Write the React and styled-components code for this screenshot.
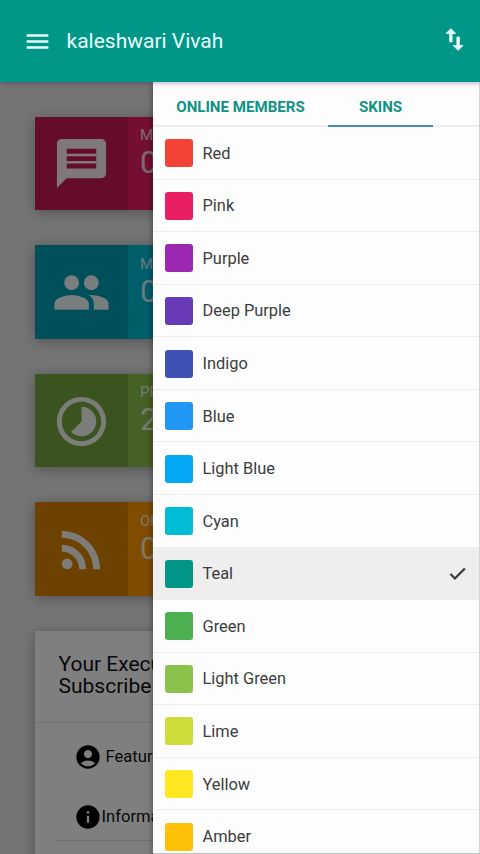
import React, { useState } from 'react';
import styled, { createGlobalStyle } from 'styled-components';
import {
    MdMenu,
    MdSwapVert,
    MdMessage,
    MdGroup,
    MdTimelapse,
    MdRssFeed,
    MdAccountCircle,
    MdInfo,
    MdDone,
} from 'react-icons/md';

const GlobalStyle = createGlobalStyle`
    * {
        box-sizing: border-box;
    }

    body {
        margin: 0;
        font-family: Roboto, 'Liberation Sans', sans-serif;
        overflow: hidden;
    }

    svg {
        display: block;
        flex: none;
    }
`;

const Page = styled.div`
    position: relative;
    height: 100vh;
    overflow: hidden;
    background-color: #e9e9e9;
`;

const Navbar = styled.header`
    position: relative;
    z-index: 3;
    display: flex;
    align-items: center;
    height: 82px;
    padding: 0 11.5px 0 23px;
    color: #e8fffb;
    background-color: #009688;
    box-shadow: 0 1px 5px rgba(0, 0, 0, 0.3);
`;

const Brand = styled.h1`
    flex: 1;
    margin: 0 0 0 14.5px;
    font-size: 21px;
    font-weight: 400;
    line-height: 24px;
`;

const SortIcon = styled(MdSwapVert)`
    margin-top: -3px;

    path:not([fill='none']) {
        stroke: currentColor;
        stroke-width: 0.7px;
    }
`;

const Content = styled.main`
    display: flex;
    flex-direction: column;
    gap: 35.3px;
    padding: 34.7px 35px 0;
`;

const InfoBox = styled.div`
    display: flex;
    flex: none;
    height: 93.3px;
    color: white;
    background-color: ${(props) => props.$color};
    box-shadow: 0 2px 12px rgba(0, 0, 0, 0.3);
`;

const InfoIcon = styled.div`
    display: flex;
    align-items: center;
    justify-content: center;
    width: 93px;
    padding-top: 1px;
    color: rgba(255, 255, 255, 0.94);
    background-color: rgba(0, 0, 0, 0.14);
`;

const InfoText = styled.div`
    padding: 9.5px 12px;
    color: rgba(255, 255, 255, 0.85);
`;

const InfoLabel = styled.div`
    font-size: 15px;
    line-height: 18px;
`;

const InfoNumber = styled.div`
    margin-top: 1px;
    font-size: 31px;
    line-height: 36px;
`;

const Card = styled.section`
    flex: none;
    height: 400px;
    background-color: white;
    box-shadow: 0 2px 12px rgba(0, 0, 0, 0.3);
`;

const CardHeader = styled.h2`
    height: 92px;
    margin: 0;
    padding: 22px 23.5px 0;
    font-size: 21px;
    font-weight: 400;
    line-height: 22.4px;
    white-space: nowrap;
    color: #111;
    border-bottom: 1px solid #e4e4e4;
`;

const CardBody = styled.div`
    padding-top: 20px;
`;

const CardRow = styled.div`
    display: flex;
    align-items: flex-start;
    gap: ${(props) => props.$gap || 0}px;
    height: ${(props) => (props.$line ? 38 : 59.5)}px;
    margin-left: 22px;
    padding-left: 16.5px;
    font-size: 16.6px;
    line-height: 28px;
    white-space: nowrap;
    color: #111;
    border-bottom: ${(props) => (props.$line ? '1px solid #dedede' : 'none')};

    svg {
        color: black;
    }
`;

const Overlay = styled.div`
    position: absolute;
    z-index: 1;
    inset: 0;
    background-color: rgba(0, 0, 0, 0.5);
`;

const Sidebar = styled.aside`
    position: absolute;
    z-index: 2;
    top: 82px;
    right: 0;
    bottom: 0;
    width: 327px;
    overflow: hidden;
    background-color: #fdfdfd;
    border-right: 1px solid #d2d4d4;
    border-bottom: 1px solid #b9c4c4;
    box-shadow: -2px 2px 5px rgba(0, 0, 0, 0.25);
`;

const TabList = styled.div`
    display: flex;
    height: 45px;
    border-bottom: 2px solid #eee;
`;

const Tab = styled.button`
    width: ${(props) => props.$width}px;
    height: 45px;
    padding: 7px 0 ${(props) => (props.$active ? 0 : 2)}px;
    font: 700 15.1px Roboto, sans-serif;
    color: #109383;
    background: none;
    border: none;
    border-bottom: ${(props) => (props.$active ? '2px solid #3c8dc9' : 'none')};
`;

const SkinList = styled.ul`
    margin: 0;
    padding: 0;
    list-style: none;
`;

const SkinItem = styled.li`
    display: flex;
    align-items: center;
    height: 52.57px;
    padding: 1px 11px 0 11.5px;
    font-size: 16.4px;
    color: #3c3c3c;
    background-color: ${(props) => (props.$active ? '#eeeeee' : 'transparent')};
    border-bottom: 1px solid #eeeeee;

    span {
        flex: 1;
        margin-left: 10px;
    }
`;

const CheckIcon = styled(MdDone)`
    path:not([fill='none']) {
        stroke: currentColor;
        stroke-width: 0.7px;
    }
`;

const Swatch = styled.div`
    width: 28px;
    height: 28px;
    border-radius: 3px;
    background-color: ${(props) => props.$color};
`;

const boxes = [
    { label: 'MESSAGES', value: 0, color: '#e91e63', Icon: MdMessage },
    { label: 'MAN', value: 0, color: '#00bcd4', Icon: MdGroup },
    { label: 'PROFILES', value: 2, color: '#8bc34a', Icon: MdTimelapse },
    { label: 'ONLINE', value: 0, color: '#ff9800', Icon: MdRssFeed },
];

const skins = [
    ['Red', '#f44336'],
    ['Pink', '#e91e63'],
    ['Purple', '#9c27b0'],
    ['Deep Purple', '#673ab7'],
    ['Indigo', '#3f51b5'],
    ['Blue', '#2196f3'],
    ['Light Blue', '#03a9f4'],
    ['Cyan', '#00bcd4'],
    ['Teal', '#009688'],
    ['Green', '#4caf50'],
    ['Light Green', '#8bc34a'],
    ['Lime', '#cddc39'],
    ['Yellow', '#ffe821'],
    ['Amber', '#ffc107'],
];

const App = () => {
    const [skin, setSkin] = useState('Teal');

    return (
        <Page>
            <GlobalStyle />
            <Navbar>
                <MdMenu size={29} />
                <Brand>kaleshwari Vivah</Brand>
                <SortIcon size={29} />
            </Navbar>
            <Content>
                {boxes.map(({ label, value, color, Icon }) => (
                    <InfoBox key={label} $color={color}>
                        <InfoIcon>
                            <Icon size={59} />
                        </InfoIcon>
                        <InfoText>
                            <InfoLabel>{label}</InfoLabel>
                            <InfoNumber>{value}</InfoNumber>
                        </InfoText>
                    </InfoBox>
                ))}
                <Card>
                    <CardHeader>
                        Your Executive
                        <br />
                        Subscribe
                    </CardHeader>
                    <CardBody>
                        <CardRow $gap={4}>
                            <MdAccountCircle size={28} />
                            Featured
                        </CardRow>
                        <CardRow $line>
                            <MdInfo size={28} />
                            Information
                        </CardRow>
                    </CardBody>
                </Card>
            </Content>
            <Overlay />
            <Sidebar>
                <TabList>
                    <Tab $width={175}>ONLINE MEMBERS</Tab>
                    <Tab $width={105} $active>
                        SKINS
                    </Tab>
                </TabList>
                <SkinList>
                    {skins.map(([name, color]) => (
                        <SkinItem
                            key={name}
                            $active={name === skin}
                            onClick={() => setSkin(name)}
                        >
                            <Swatch $color={color} />
                            <span>{name}</span>
                            {name === skin && <CheckIcon size={21} />}
                        </SkinItem>
                    ))}
                </SkinList>
            </Sidebar>
        </Page>
    );
};

export default App;
